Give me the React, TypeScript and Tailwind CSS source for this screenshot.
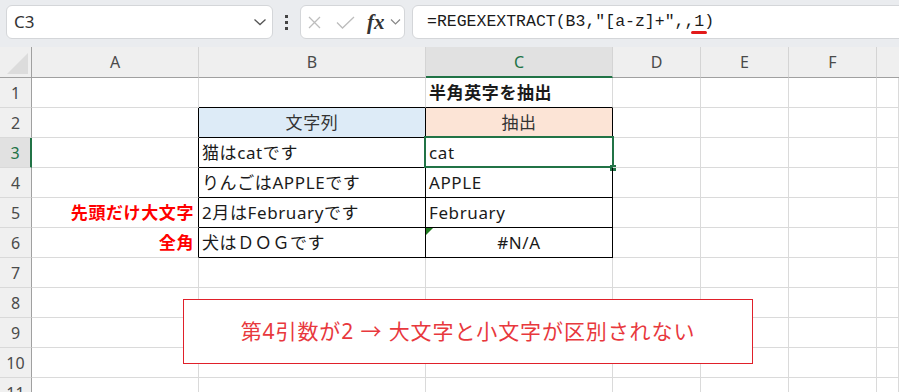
import React from "react";

const font = "font-['Noto_Sans','Noto_Sans_CJK_JP',sans-serif]";

function RowHeader({ n, sel }: { n: number; sel?: boolean }) {
  return sel ? (
    <div className="w-[32px] shrink-0 h-full flex items-center justify-center bg-[#e1e1e1] border-r-2 border-r-[#217346] border-b border-b-[#d9d9d9] text-[#217346] text-[16px]">
      {n}
    </div>
  ) : (
    <div className="w-[32px] shrink-0 h-full flex items-center justify-center bg-[#f0f0f0] border-r border-r-[#a0a0a0] border-b border-b-[#d9d9d9] text-[#4a4a4a] text-[16px]">
      {n}
    </div>
  );
}

function Cell({ className, children }: { className: string; children?: React.ReactNode }) {
  return (
    <div className={"relative h-full shrink-0 border-r border-b flex items-center whitespace-nowrap text-[17px] tracking-[0.6px] text-[#1a1a1a] " + className}>
      {children}
    </div>
  );
}

function EmptyRest() {
  return (
    <>
      <Cell className="w-[88px] border-r-[#dadada] border-b-[#dadada]" />
      <Cell className="w-[88px] border-r-[#dadada] border-b-[#dadada]" />
      <Cell className="w-[88px] border-r-[#dadada] border-b-[#dadada]" />
      <Cell className="flex-1 border-r-[#dadada] border-b-[#dadada]" />
    </>
  );
}

function EmptyRow({ n }: { n: number }) {
  return (
    <div className="flex h-[30px]">
      <RowHeader n={n} />
      <Cell className="w-[167px] border-r-[#dadada] border-b-[#dadada]" />
      <Cell className="w-[227px] border-r-[#dadada] border-b-[#dadada]" />
      <Cell className="w-[187px] border-r-[#dadada] border-b-[#dadada]" />
      <EmptyRest />
    </div>
  );
}

export default function App() {
  return (
    <div className={"relative w-[899px] h-[392px] overflow-hidden bg-white " + font}>
      {/* Formula bar */}
      <div className="h-[47px] bg-[#eaecef] flex items-start pt-[5px] pl-[6px]">
        <div className="w-[267px] h-[34px] shrink-0 rounded-[6px] bg-white border border-[#d4d6d9] flex items-center justify-between pl-[7px] pr-[5px]">
          <span className="text-[17px] text-[#333]">C3</span>
          <svg width="14" height="10" viewBox="0 0 14 10">
            <path d="M1.5 2.5 L7 7.5 L12.5 2.5" fill="none" stroke="#555" strokeWidth="1.3" />
          </svg>
        </div>
        <div className="w-[27px] shrink-0 h-[34px] flex flex-col items-center justify-center gap-[3px]">
          <div className="w-[3px] h-[3px] bg-[#444]" />
          <div className="w-[3px] h-[3px] bg-[#444]" />
          <div className="w-[3px] h-[3px] bg-[#444]" />
        </div>
        <div className="w-[105px] h-[34px] shrink-0 rounded-[6px] bg-white border border-[#d4d6d9] flex items-center pl-[6px]">
          <svg width="13" height="13" viewBox="0 0 13 13" className="ml-[1px]">
            <path d="M1 1 L12 12 M12 1 L1 12" stroke="#bdbdbd" strokeWidth="1.3" />
          </svg>
          <svg width="19" height="13" viewBox="0 0 19 13" className="ml-[15px]">
            <path d="M1 6.5 L6.5 12 L18 1" fill="none" stroke="#bdbdbd" strokeWidth="1.3" />
          </svg>
          <span className="ml-[12px] font-['Liberation_Serif',serif] italic font-bold text-[21px] text-[#333] leading-none">fx</span>
          <svg width="11" height="8" viewBox="0 0 11 8" className="ml-[5px]">
            <path d="M1 1.5 L5.5 6 L10 1.5" fill="none" stroke="#888" strokeWidth="1.2" />
          </svg>
        </div>
        <div className="ml-[7px] w-[520px] h-[34px] shrink-0 rounded-[6px] bg-white border border-[#d4d6d9] flex items-center pl-[14px]">
          <span className="font-['Liberation_Mono',monospace] text-[16.5px] text-[#1a1a1a] whitespace-nowrap">
            =REGEXEXTRACT(B3,"[a-z]+",,
            <span className="relative">
              1
              <span className="absolute left-[-3px] right-[-3px] top-[19px] h-[3px] rounded-full bg-[#e21a1a]" />
            </span>
            )
          </span>
        </div>
      </div>

      {/* Column headers */}
      <div className="flex h-[31px] text-[16px] text-[#4a4a4a]">
        <div className="relative w-[32px] shrink-0 h-full bg-[#efefef] border-r border-r-[#a0a0a0] border-b border-b-[#a0a0a0]">
          <div className="absolute left-[7px] bottom-[3px] w-0 h-0 border-l-[21px] border-l-transparent border-b-[21px] border-b-[#dcdcdc]" />
        </div>
        <div className="w-[167px] shrink-0 h-full bg-[#efefef] border-r border-r-[#d4d4d4] border-b border-b-[#a0a0a0] flex items-center justify-center">A</div>
        <div className="w-[227px] shrink-0 h-full bg-[#efefef] border-r border-r-[#d4d4d4] border-b border-b-[#a0a0a0] flex items-center justify-center">B</div>
        <div className="w-[187px] shrink-0 h-full bg-[#e1e1e1] border-r border-r-[#d4d4d4] border-b-2 border-b-[#217346] flex items-center justify-center text-[#217346]">C</div>
        <div className="w-[88px] shrink-0 h-full bg-[#efefef] border-r border-r-[#d4d4d4] border-b border-b-[#a0a0a0] flex items-center justify-center">D</div>
        <div className="w-[88px] shrink-0 h-full bg-[#efefef] border-r border-r-[#d4d4d4] border-b border-b-[#a0a0a0] flex items-center justify-center">E</div>
        <div className="w-[88px] shrink-0 h-full bg-[#efefef] border-r border-r-[#d4d4d4] border-b border-b-[#a0a0a0] flex items-center justify-center">F</div>
        <div className="flex-1 h-full bg-[#efefef] border-b border-b-[#a0a0a0]" />
      </div>

      {/* Row 1 */}
      <div className="flex h-[30px]">
        <RowHeader n={1} />
        <Cell className="w-[167px] border-r-[#dadada] border-b-[#dadada]" />
        <Cell className="w-[227px] border-r-[#dadada] border-b-black" />
        <Cell className="w-[187px] border-r-[#dadada] border-b-black px-[3px] font-bold">半角英字を抽出</Cell>
        <EmptyRest />
      </div>

      {/* Row 2 */}
      <div className="flex h-[30px]">
        <RowHeader n={2} />
        <Cell className="w-[167px] border-r-black border-b-[#dadada]" />
        <Cell className="w-[227px] border-r-black border-b-black bg-[#ddebf7] justify-center text-[#333]">文字列</Cell>
        <Cell className="w-[187px] border-r-black border-b-black bg-[#fce4d6] justify-center text-[#333]">抽出</Cell>
        <EmptyRest />
      </div>

      {/* Row 3 */}
      <div className="flex h-[30px]">
        <RowHeader n={3} sel />
        <Cell className="w-[167px] border-r-black border-b-[#dadada]" />
        <Cell className="w-[227px] border-r-black border-b-black px-[3px]">猫はcatです</Cell>
        <Cell className="w-[187px] border-r-black border-b-black px-[3px]">
          cat
          <div className="absolute left-[-2px] top-[-2px] w-[190px] h-[32px] border-2 border-[#217346]" />
          <div className="absolute right-[-4px] bottom-[-4px] w-[6px] h-[6px] bg-[#217346]" />
        </Cell>
        <EmptyRest />
      </div>

      {/* Row 4 */}
      <div className="flex h-[30px]">
        <RowHeader n={4} />
        <Cell className="w-[167px] border-r-black border-b-[#dadada]" />
        <Cell className="w-[227px] border-r-black border-b-black px-[3px]">りんごはAPPLEです</Cell>
        <Cell className="w-[187px] border-r-black border-b-black px-[3px]">APPLE</Cell>
        <EmptyRest />
      </div>

      {/* Row 5 */}
      <div className="flex h-[30px]">
        <RowHeader n={5} />
        <Cell className="w-[167px] border-r-black border-b-[#dadada] justify-end pr-[4px] font-bold text-[#ff0000]">先頭だけ大文字</Cell>
        <Cell className="w-[227px] border-r-black border-b-black px-[3px]">2月はFebruaryです</Cell>
        <Cell className="w-[187px] border-r-black border-b-black px-[3px]">February</Cell>
        <EmptyRest />
      </div>

      {/* Row 6 */}
      <div className="flex h-[30px]">
        <RowHeader n={6} />
        <Cell className="w-[167px] border-r-black border-b-[#dadada] justify-end pr-[4px] font-bold text-[#ff0000]">全角</Cell>
        <Cell className="w-[227px] border-r-black border-b-black px-[3px]">犬はＤＯＧです</Cell>
        <Cell className="w-[187px] border-r-black border-b-black justify-center">
          #N/A
          <div className="absolute left-0 top-0 w-0 h-0 border-t-[7px] border-t-[#1f7a1f] border-r-[7px] border-r-transparent" />
        </Cell>
        <EmptyRest />
      </div>

      <EmptyRow n={7} />
      <EmptyRow n={8} />
      <EmptyRow n={9} />
      <EmptyRow n={10} />
      <EmptyRow n={11} />

      {/* Text box shape */}
      <div className="absolute left-[183px] top-[299px] w-[570px] h-[65px] bg-white border border-[#e0202a] flex items-center justify-center">
        <span className="text-[21px] text-[#e8383d] tracking-[0.9px]">第4引数が2 → 大文字と小文字が区別されない</span>
      </div>
    </div>
  );
}
